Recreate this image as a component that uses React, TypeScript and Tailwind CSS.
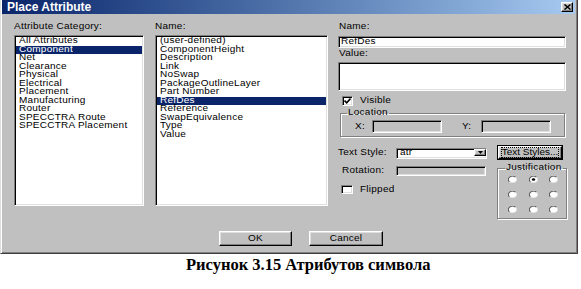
import React from "react";

const sunken =
  "border border-t-[#808080] border-l-[#808080] border-b-white border-r-white shadow-[inset_1px_1px_0_#000,inset_-1px_-1px_0_#dfdfdf] shrink-0";
const raised =
  "border border-t-white border-l-white border-b-black border-r-black shadow-[inset_-1px_-1px_0_#808080,inset_1px_1px_0_#dfdfdf] bg-[#c0c0c0] shrink-0";
const etched = "border border-[#808080] shadow-[inset_1px_1px_0_#fff,1px_1px_0_#fff] shrink-0";

function Radio({ on }: { on?: boolean }) {
  return (
    <svg width="9" height="7" viewBox="0 0 12 12" preserveAspectRatio="none" className="block">
      <circle cx="6" cy="6" r="5.5" fill="#fff" />
      <path d="M9.9 2.1 A5.5 5.5 0 0 0 2.1 9.9" stroke="#555" strokeWidth="1.6" fill="none" />
      <path d="M2.1 9.9 A5.5 5.5 0 0 0 9.9 2.1" stroke="#dfdfdf" strokeWidth="1.2" fill="none" />
      {on && <circle cx="6" cy="6" r="2.2" fill="#000" />}
    </svg>
  );
}

function Check({ on }: { on?: boolean }) {
  return (
    <div className={`${sunken} bg-white w-[11px] h-[10px] flex items-center justify-center`}>
      {on && (
        <svg width="7" height="6" viewBox="0 0 7 6" className="block">
          <path d="M0.5 2.5 L2.7 4.8 L6.5 0.6" stroke="#000" strokeWidth="1.6" fill="none" />
        </svg>
      )}
    </div>
  );
}

function T({ children, className = "" }: { children: React.ReactNode; className?: string }) {
  return <span className={`inline-block scale-y-[0.82] origin-center ${className}`}>{children}</span>;
}

const cats = [
  "All Attributes",
  "Component",
  "Net",
  "Clearance",
  "Physical",
  "Electrical",
  "Placement",
  "Manufacturing",
  "Router",
  "SPECCTRA Route",
  "SPECCTRA Placement",
];
const names = [
  "(user-defined)",
  "ComponentHeight",
  "Description",
  "Link",
  "NoSwap",
  "PackageOutlineLayer",
  "Part Number",
  "RefDes",
  "Reference",
  "SwapEquivalence",
  "Type",
  "Value",
];

function ListBox({ items, sel, width }: { items: string[]; sel: string; width: string }) {
  return (
    <div className={`${sunken} bg-white h-[171px] ${width} pt-[1px] pl-[1px] pr-[1px]`}>
      {items.map((t) => (
        <div
          key={t}
          className={`h-[8.5px] leading-[7.5px] pl-[3px] whitespace-nowrap ${
            t === sel ? "bg-[#0a246a] text-white" : "text-black"
          }`}
        >
          <T className="leading-[7.5px]">{t}</T>
        </div>
      ))}
    </div>
  );
}

export default function App() {
  return (
    <div
      className="w-[581px] h-[289px] bg-white flex flex-col overflow-hidden"
      style={{ fontFamily: '"Liberation Sans", Arial, sans-serif' }}
    >
      <div className="w-[578px] h-[254px] shrink-0 bg-[#c0c0c0] border-l border-r border-b border-l-[#dfdfdf] border-r-[#404040] border-b-[#404040] shadow-[inset_1px_0_0_#fff,inset_-1px_-1px_0_#808080] flex flex-col text-[10px] tracking-[0.25px] text-black">
        {/* title bar */}
        <div className="h-[14px] shrink-0 ml-[1px] mr-[2px] bg-gradient-to-r from-[#0a246a] to-[#a6caf0] flex items-center justify-between">
          <span className="pl-[5px] text-white font-bold text-[12px] tracking-normal leading-[14px]">
            Place Attribute
          </span>
          <div className={`${raised} w-[12px] h-[10px] mr-[2px] flex items-center justify-center`}>
            <svg width="7" height="6" viewBox="0 0 7 6" className="block">
              <path d="M0.5 0.5 L6.5 5.5 M6.5 0.5 L0.5 5.5" stroke="#000" strokeWidth="1.5" />
            </svg>
          </div>
        </div>

        {/* columns */}
        <div className="flex items-start pt-[7px] pl-[13px] shrink-0">
          {/* column 1 */}
          <div className="flex flex-col w-[130px] shrink-0">
            <div className="h-[14px] leading-[12px] shrink-0">
              <T className="leading-[12px]">Attribute Category:</T>
            </div>
            <ListBox items={cats} sel="Component" width="w-[130px]" />
          </div>
          {/* column 2 */}
          <div className="flex flex-col w-[173px] ml-[11px] shrink-0">
            <div className="h-[14px] leading-[12px] shrink-0">
              <T className="leading-[12px]">Name:</T>
            </div>
            <ListBox items={names} sel="RefDes" width="w-[173px]" />
          </div>
          {/* column 3 */}
          <div className="flex flex-col w-[228px] ml-[10px] shrink-0">
            <div className="h-[14px] leading-[12px] pl-[1px] shrink-0">
              <T className="leading-[12px]">Name:</T>
            </div>
            <div className={`${sunken} bg-white mt-[1px] h-[12px] pl-[2px] pt-[1px] leading-[8px]`}>
              <T className="leading-[8px]">RefDes</T>
            </div>
            <div className="h-[14px] leading-[12px] pl-[1px] shrink-0">
              <T className="leading-[12px]">Value:</T>
            </div>
            <div className={`${sunken} bg-white h-[29px]`} />
            <div className="flex items-center mt-[5px] h-[10px] pl-[4px] shrink-0">
              <Check on />
              <T className="ml-[7px] leading-[10px]">Visible</T>
            </div>
            <fieldset className={`${etched} mt-[2px] ml-[2px] w-[225px] pb-[3px]`}>
              <legend className="ml-[6px] px-[1px] leading-[10px]">
                <T className="leading-[10px]">Location</T>
              </legend>
              <div className="flex items-center pt-[2px] pl-[14px] h-[15px]">
                <T className="w-[17px] leading-[13px]">X:</T>
                <div className={`${sunken} w-[70px] h-[13px]`} />
                <T className="ml-[20px] w-[19px] leading-[13px]">Y:</T>
                <div className={`${sunken} w-[70px] h-[13px]`} />
              </div>
            </fieldset>

            <div className="flex items-start shrink-0">
              {/* left sub-column */}
              <div className="flex flex-col w-[159px] shrink-0">
                <div className="flex mt-[11px] h-[11px] shrink-0">
                  <T className="w-[58px] leading-[7px]">Text Style:</T>
                  <div className={`${sunken} bg-white w-[91px] h-[11px] flex items-start`}>
                    <T className="flex-1 pl-[3px] leading-[8px]">atr</T>
                    <div className={`${raised} w-[12px] h-[7px] flex items-center justify-center`}>
                      <svg width="5" height="3" viewBox="0 0 5 3" className="block">
                        <path d="M0 0 H5 L2.5 3 Z" fill="#000" />
                      </svg>
                    </div>
                  </div>
                </div>
                <div className="flex mt-[7px] h-[10px] shrink-0">
                  <T className="w-[58px] pl-[4px] leading-[7px]">Rotation:</T>
                  <div className={`${sunken} w-[90px] h-[10px]`} />
                </div>
                <div className="flex items-center mt-[9px] h-[9px] pl-[3px] shrink-0">
                  <div className={`${sunken} bg-white w-[12px] h-[9px]`} />
                  <T className="ml-[7px] leading-[9px]">Flipped</T>
                </div>
              </div>
              {/* right sub-column */}
              <div className="flex flex-col w-[70px] shrink-0">
                <div className="mt-[8px] w-[66px] h-[15px] border border-black shrink-0">
                  <div className={`${raised} w-full h-full flex items-center justify-center`}>
                    <span className="border border-dotted border-black leading-[9px] tracking-normal whitespace-nowrap">
                      <T className="leading-[9px]">Text Styles...</T>
                    </span>
                  </div>
                </div>
                <fieldset className={`${etched} mt-[4px] w-[70px] h-[55px]`}>
                  <legend className="ml-[7px] px-[1px] leading-[8px]">
                    <T className="leading-[8px]">Justification</T>
                  </legend>
                  <div className="grid grid-cols-[repeat(3,9px)] gap-x-[11.5px] gap-y-[8px] pl-[10px] pt-[4px]">
                    <Radio />
                    <Radio on />
                    <Radio />
                    <Radio />
                    <Radio />
                    <Radio />
                    <Radio />
                    <Radio />
                    <Radio />
                  </div>
                </fieldset>
              </div>
            </div>
          </div>
        </div>

        {/* buttons */}
        <div className="flex mt-[12px] ml-[218px] shrink-0">
          <div className={`${raised} w-[73px] h-[15px] flex items-center justify-center leading-[11px]`}>
            <T className="leading-[11px]">OK</T>
          </div>
          <div className={`${raised} w-[74px] h-[15px] ml-[17px] flex items-center justify-center leading-[11px]`}>
            <T className="leading-[11px]">Cancel</T>
          </div>
        </div>
      </div>

      <div
        className="mt-[1px] pl-[186px] text-[16.5px] font-bold text-black whitespace-nowrap leading-[19px] shrink-0"
        style={{ fontFamily: '"Liberation Serif", "Times New Roman", serif' }}
      >
        Рисунок 3.15 Атрибутов символа
      </div>
    </div>
  );
}
